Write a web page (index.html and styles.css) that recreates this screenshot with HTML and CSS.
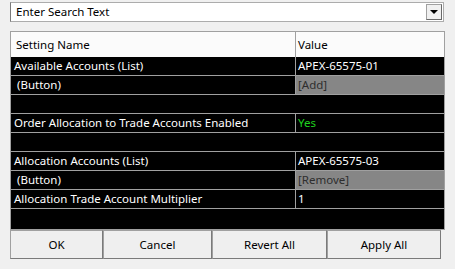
FILE: index.html
```html
<!DOCTYPE html>
<html lang="en">
<head>
    <meta charset="UTF-8">
    <meta name="viewport" content="width=device-width, initial-scale=1.0">
    <title>Account Allocation Settings</title>
    <link rel="stylesheet" href="styles.css">
</head>
<body>
    <div class="search">
        <span class="search-text">Enter Search Text</span>
        <span class="drop-btn"><span class="arrow"></span></span>
    </div>

    <div class="grid">
        <div class="row head">
            <div class="name">Setting Name</div>
            <div class="value">Value</div>
        </div>

        <div class="row">
            <div class="name">Available Accounts (List)</div>
            <div class="value">APEX-65575-01</div>
        </div>
        <div class="row">
            <div class="name">&nbsp;(Button)</div>
            <div class="value action">[Add]</div>
        </div>
        <div class="row category"></div>
        <div class="row">
            <div class="name">Order Allocation to Trade Accounts Enabled</div>
            <div class="value yes">Yes</div>
        </div>
        <div class="row category"></div>
        <div class="row">
            <div class="name">Allocation Accounts (List)</div>
            <div class="value">APEX-65575-03</div>
        </div>
        <div class="row">
            <div class="name">&nbsp;(Button)</div>
            <div class="value action">[Remove]</div>
        </div>
        <div class="row">
            <div class="name">Allocation Trade Account Multiplier</div>
            <div class="value">1</div>
        </div>
        <div class="filler"></div>
    </div>

    <div class="buttons">
        <button class="btn-ok">OK</button>
        <button class="btn-cancel">Cancel</button>
        <button class="btn-revert">Revert All</button>
        <button class="btn-apply">Apply All</button>
    </div>
</body>
</html>
```

FILE: styles.css
```css
/* General Styles */
body {
    font-family: 'Noto Sans', sans-serif;
    font-size: 11.5px;
    background: #f0f0f0;
    margin: 0;
    padding-top: 2px;
    color: #000;
    overflow: hidden;
}

/* Search combo box */
.search {
    display: flex;
    align-items: center;
    height: 20px;
    margin: 0 11px 0 10px;
    background: #fff;
    border: 1px solid #acacac;
    border-left-color: #7a7a7a;
    box-sizing: border-box;
}

.search-text {
    flex: 1;
    padding-left: 5px;
    line-height: 18px;
}

.drop-btn {
    width: 16px;
    height: 16px;
    margin-right: 1px;
    display: flex;
    align-items: center;
    justify-content: center;
    background: #f0f0f0;
    border: 1px solid #a0a0a0;
    border-right-color: #696969;
    border-bottom-color: #696969;
    box-sizing: border-box;
}

.arrow {
    width: 0;
    height: 0;
    border-left: 4px solid transparent;
    border-right: 4px solid transparent;
    border-top: 4px solid #000;
}

/* Property grid */
.grid {
    margin: 9px 10px 0 10px;
    border: 1px solid #a0a0a0;
    background: #000;
}

.row {
    display: flex;
    height: 19px;
    box-sizing: border-box;
    border-bottom: 1px solid #a0a0a0;
    color: #fff;
    line-height: 18px;
}

.row.head {
    height: 25px;
    border-bottom: none;
    background: #fbfbfb;
    color: #000;
    line-height: 26px;
}

.name {
    width: 285px;
    flex-shrink: 0;
    padding-left: 3px;
    border-right: 1px solid #a0a0a0;
    box-sizing: border-box;
    white-space: nowrap;
    overflow: hidden;
}

.head .name {
    padding-left: 5px;
}

.value {
    flex: 1;
    padding-left: 2px;
    white-space: nowrap;
}

.value.action {
    background: #868686;
    color: #2e2e2e;
}

.value.yes {
    color: #1fd11f;
}

.filler {
    height: 20px;
}

/* Bottom buttons */
.buttons {
    display: flex;
    margin: 0 14px 0 10px;
}

button {
    font-family: 'Noto Sans', sans-serif;
    font-size: 11.5px;
    height: 29px;
    margin: 0;
    padding: 0;
    background: #efefef;
    border: 1px solid #a0a0a0;
    border-right-color: #7a7a7a;
    border-bottom-color: #7a7a7a;
    color: #000;
    cursor: pointer;
}

.btn-ok {
    width: 93px;
}

.btn-cancel {
    width: 109px;
}

.btn-revert {
    width: 115px;
}

.btn-apply {
    flex: 1;
}
```
